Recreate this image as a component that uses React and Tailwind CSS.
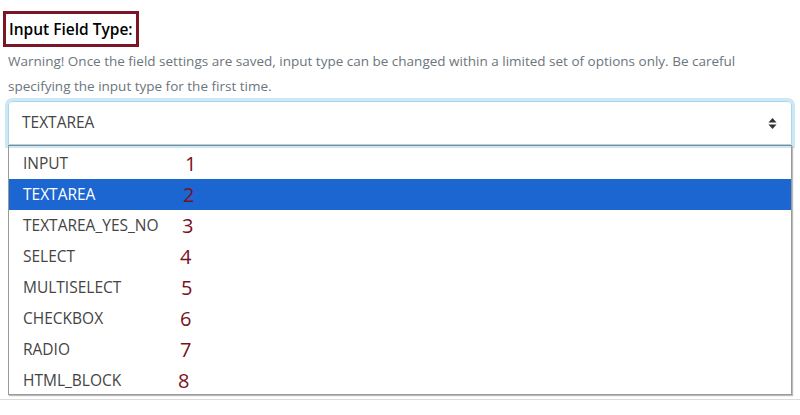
const OPTIONS = [
    { label: "INPUT", n: "1", ml: "ml-[162px]" },
    { label: "TEXTAREA", n: "2", ml: "ml-[160px]", active: true },
    { label: "TEXTAREA_YES_NO", n: "3", ml: "ml-[159px]" },
    { label: "SELECT", n: "4", ml: "ml-[157px]" },
    { label: "MULTISELECT", n: "5", ml: "ml-[158px]" },
    { label: "CHECKBOX", n: "6", ml: "ml-[157px]" },
    { label: "RADIO", n: "7", ml: "ml-[157px]" },
    { label: "HTML_BLOCK", n: "8", ml: "ml-[155px]" },
]

export default function App() {
    return (
        <div className="h-[415px] w-[800px] overflow-hidden bg-white font-['Open_Sans',sans-serif]">
            <div className="pl-[3px] pt-[11px]">
                <div className="inline-block border-[3px] border-[#7a1426] px-[3px] py-[3px]">
                    <h2 className="text-[15.5px] font-semibold leading-[24px] text-black">Input Field Type:</h2>
                </div>
            </div>

            <p className="mt-[2px] px-[8px] text-[13.5px] leading-[25px] text-[#6c757d]">
                Warning! Once the field settings are saved, input type can be changed within a limited set of options only. Be careful specifying the input type for the first time.
            </p>

            <div className="mx-[8px] mt-[2px] flex h-[44px] items-center justify-between rounded-t-[4px] border border-[#a9d6ec] pl-[13px] pr-[14px] shadow-[0_0_0_3px_#cde8f5]">
                <span className="text-[15.5px] text-[#444]">TEXTAREA</span>
                <svg viewBox="0 0 10 14" className="h-[13px] w-[9px]" fill="#333">
                    <path d="M5 1 L9.5 6 H0.5 Z" />
                    <path d="M5 13 L9.5 8 H0.5 Z" />
                </svg>
            </div>

            <ul className="mx-[8px] h-[250px] border border-[#9a9a9a] border-t-[#888] shadow-[1px_1px_1px_#bbb] pt-[2px]">
                {OPTIONS.map(opt => (
                    <li
                        key={opt.label}
                        className={`flex h-[31px] items-center pl-[14px] text-[15.5px] ${opt.active ? "bg-[#1c66d1] text-white" : "text-[#444]"}`}
                    >
                        <span className="w-[0px] whitespace-nowrap">{opt.label}</span>
                        <span className={`${opt.ml} text-[20px] leading-none text-[#7b1020]`}>{opt.n}</span>
                    </li>
                ))}
            </ul>

            <div className="mt-[4px] h-[1px] w-full bg-[#dcdcdc]" />
        </div>
    )
}
